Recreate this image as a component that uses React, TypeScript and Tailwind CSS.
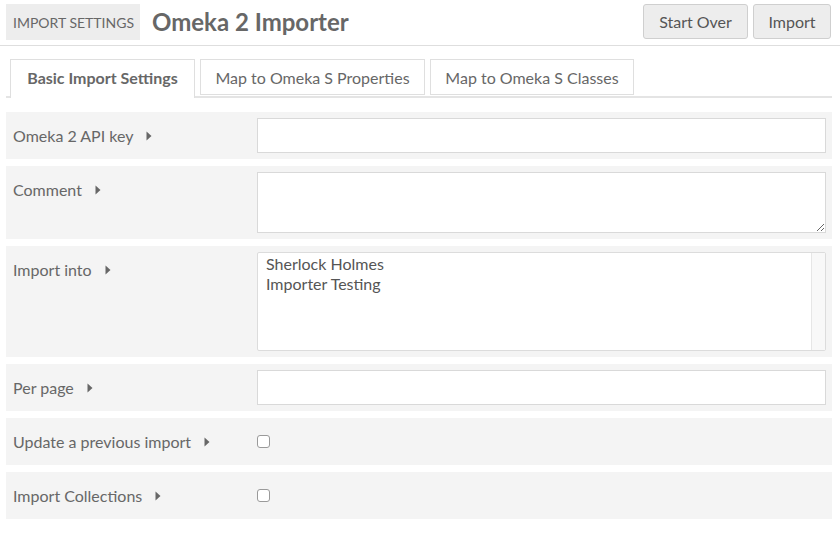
import React from "react";

const Arrow = () => (
  <svg width="6" height="10" viewBox="0 0 6 10" className="ml-[13px] inline-block">
    <path d="M0.5 0.5 L5.5 5 L0.5 9.5 Z" fill="#676767" />
  </svg>
);

function Row({ label, children }: { label: string; children: React.ReactNode }) {
  return (
    <div className="flex bg-[#f4f4f4] px-[6px] py-[6px]">
      <div className="w-[245px] shrink-0 pl-[1px] pt-[8px] text-[16px] leading-[20px] text-[#676767] flex items-start">
        <span className="flex items-center">
          {label}
          <Arrow />
        </span>
      </div>
      <div className="flex-1 min-w-0">{children}</div>
    </div>
  );
}

const Checkbox = () => (
  <div className="h-[35px] flex items-center">
    <span className="block w-[13px] h-[13px] bg-white border border-[#9a9a9a] rounded-[3px]" />
  </div>
);

export default function App() {
  return (
    <div className="w-[840px] h-[540px] bg-white overflow-hidden" style={{ fontFamily: "Lato, 'Open Sans', sans-serif" }}>
      <div className="flex items-start justify-between pt-[4px] pb-[5px] pl-[6px] pr-[9px] border-b border-[#dedede]">
        <div className="flex items-center">
          <div className="h-[36px] w-[134px] bg-[#ededed] flex items-center pl-[7px] text-[14px] text-[#676767] uppercase">
            Import Settings
          </div>
          <h1 className="ml-[12px] text-[24px] font-bold text-[#676767] leading-[36px]">Omeka 2 Importer</h1>
        </div>
        <div className="flex gap-[5px]">
          <button className="h-[35px] w-[105px] bg-[#ededed] border border-[#cfcfcf] rounded-[3px] text-[16px] text-[#555] flex items-center justify-center">
            Start Over
          </button>
          <button className="h-[35px] w-[78px] bg-[#ededed] border border-[#cfcfcf] rounded-[3px] text-[16px] text-[#555] flex items-center justify-center">
            Import
          </button>
        </div>
      </div>

      <div className="pl-[6px] pr-[8px] pt-[13px]">
        <div className="border-b-2 border-[#e4e4e4] pb-[1px] pl-[4px] flex gap-[5px]">
          <div className="w-[185px] border border-b-0 border-[#dfdfdf] bg-white flex items-center justify-center text-[16px] font-bold text-[#676767] -mb-[3px] h-[39px] pb-[3px]">
            Basic Import Settings
          </div>
          <div className="w-[225px] h-[36px] border border-[#dfdfdf] flex items-center justify-center text-[16px] text-[#676767] pt-[1px]">
            Map to Omeka S Properties
          </div>
          <div className="w-[204px] h-[36px] border border-[#dfdfdf] flex items-center justify-center text-[16px] text-[#676767] pt-[1px]">
            Map to Omeka S Classes
          </div>
        </div>

        <div className="mt-[14px] flex flex-col gap-[7px]">
          <Row label="Omeka 2 API key">
            <div className="h-[35px] bg-white border border-[#d9d9d9]" />
          </Row>
          <Row label="Comment">
            <textarea className="block w-full h-[61px] bg-white border border-[#d9d9d9] outline-none" />
          </Row>
          <Row label="Import into">
            <div className="h-[99px] bg-white border border-[#dcdcdc] rounded-[2px] flex">
              <div className="flex-1 pl-[8px] pt-[1px] text-[16px] leading-[20px] text-[#555]">
                <div>Sherlock Holmes</div>
                <div>Importer Testing</div>
              </div>
              <div className="w-[14px] bg-[#f8f8f8] border-l border-[#e6e6e6]" />
            </div>
          </Row>
          <Row label="Per page">
            <div className="h-[35px] bg-white border border-[#d9d9d9]" />
          </Row>
          <Row label="Update a previous import">
            <Checkbox />
          </Row>
          <Row label="Import Collections">
            <Checkbox />
          </Row>
        </div>
      </div>
    </div>
  );
}
